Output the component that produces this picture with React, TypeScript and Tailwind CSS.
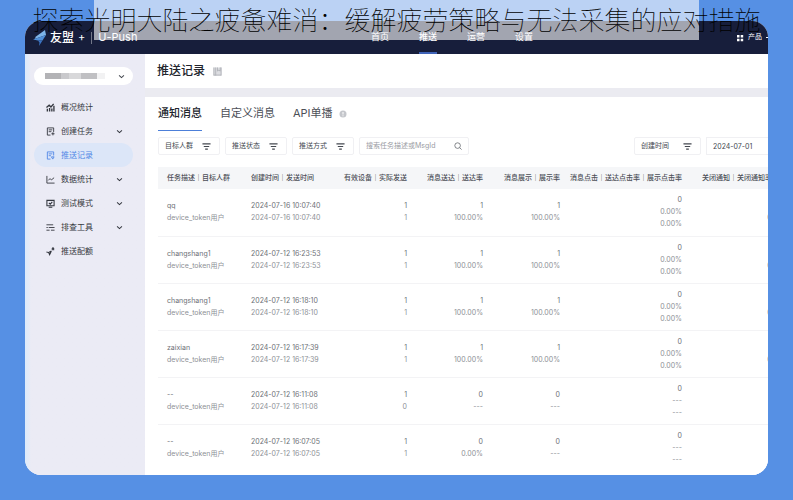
import { ReactNode } from "react";
import clsx from "clsx";

type Row = {
  name: string;
  time: string;
  sent: string;
  delivered: string[];
  shown: string[];
  clicked: string[];
  closed: string[];
  devices: string;
};

const clicks = ["0", "0.00%", "0.00%"];
const full = ["1", "100.00%"];
const none = ["0", "---"];

const rows: Row[] = [
  { name: "qq", time: "2024-07-16 10:07:40", devices: "1", sent: "1", delivered: full, shown: full, clicked: clicks, closed: ["0", "0.00%"] },
  { name: "changshang1", time: "2024-07-12 16:23:53", devices: "1", sent: "1", delivered: full, shown: full, clicked: clicks, closed: ["0", "0.00%"] },
  { name: "changshang1", time: "2024-07-12 16:18:10", devices: "1", sent: "1", delivered: full, shown: full, clicked: clicks, closed: ["0", "0.00%"] },
  { name: "zaixian", time: "2024-07-12 16:17:39", devices: "1", sent: "1", delivered: full, shown: full, clicked: clicks, closed: ["0", "0.00%"] },
  { name: "--", time: "2024-07-12 16:11:08", devices: "1", sent: "0", delivered: none, shown: none, clicked: ["0", "---", "---"], closed: ["0", "---"] },
  { name: "--", time: "2024-07-12 16:07:05", devices: "1", sent: "1", delivered: ["0", "0.00%"], shown: none, clicked: ["0", "---", "---"], closed: ["0", "---"] },
];

// Shared 10x10 stroke icon
function Icon({ children, className }: { children: ReactNode; className?: string }) {
  return (
    <svg
      viewBox="0 0 10 10"
      fill="none"
      stroke="currentColor"
      strokeWidth="1"
      className={clsx("shrink-0", className)}
      aria-hidden="true"
    >
      {children}
    </svg>
  );
}

const menu = [
  {
    label: "概况统计",
    icon: <path d="M1.5 9.500V6.500M4 9.500V5.500M6.500 9.500V6M8.800 9.500V3M.5 5l3-2.500 2 2L8.500 1" strokeWidth="1.5" />,
  },
  {
    label: "创建任务",
    expandable: true,
    icon: <path d="M5 9H1.5V1h7v4.5M3 3.2h4M3 5.2h3M6 7.5h3.5M7.7 5.8v3.5" />,
  },
  {
    label: "推送记录",
    active: true,
    icon: <path d="M5 9H1.5V1h7v4M3 3.2h4M3 5.2h2.5M6 6.5h3L7.5 9z" />,
  },
  {
    label: "数据统计",
    expandable: true,
    icon: <path d="M1 1v8h8.5M2.5 6l2-2 1.5 1.5L9 3" />,
  },
  {
    label: "测试模式",
    expandable: true,
    icon: <path d="M1 1.5h8v6H1zM3 9.2h4M3.2 4.2L4.7 5.7 7 3.2" strokeWidth="1.2" />,
  },
  {
    label: "排查工具",
    expandable: true,
    icon: <path d="M.5 2H8M3 5h6.5M.5 5H2M.5 8H4M5.5 8h4" />,
  },
  {
    label: "推送配额",
    icon: <path d="M.5 5.5l2.5.7 1 2.3 2-4M3 6.2L6 4.5M7 1v2.5M7 1h1.5M8.5 1v2.5" strokeWidth="1.2" />,
  },
];

function Chevron({ className }: { className?: string }) {
  return (
    <Icon className={clsx("size-[7px]", className)}>
      <path d="M1.5 3.5L5 6.5l3.5-3" strokeWidth="1.5" />
    </Icon>
  );
}

function FilterButton({ label, className = "w-[62px]" }: { label: string; className?: string }) {
  return (
    <button
      className={clsx(
        "flex h-[18px] shrink-0 items-center justify-between rounded-xs border border-[#f0f0f3] pr-2 pl-1.5 text-[7px] text-[#444850]",
        className
      )}
    >
      {label}
      <Icon className="size-[9px]">
        <path d="M.5 2h9M2 5h6M3.5 8h3" strokeWidth="1.3" />
      </Icon>
    </button>
  );
}

function Stack({ lines }: { lines: string[] }) {
  return (
    <>
      {lines.map((line, i) => (
        <div key={i} className={i === 0 ? "text-[#6d7076]" : "text-[#8d9096]"}>
          {line}
        </div>
      ))}
    </>
  );
}

function Header() {
  return (
    <header className="flex h-[33px] shrink-0 bg-[#171e3b] pl-2 text-white">
      <div className="flex w-[338px] shrink-0 items-center">
        <svg viewBox="0 0 14 16" className="h-4 w-[14px]" aria-hidden="true">
          <path d="M12 0L3 6.500 1.500 9 13 5z" fill="#7db4e8" />
          <path d="M0 9.500l13-4.500-3.500 5.500H5z" fill="#4f8fd8" />
          <path d="M5 10.500h4.500L6 16l.5-3.500z" fill="#3b74c4" />
        </svg>
        <span className="ml-[3px] text-[12px] font-medium">友盟</span>
        <span className="ml-1 text-[11px]">+</span>
        <span className="mx-1.5 h-3 w-px bg-white/40" />
        <span className="text-[11px]">U-Push</span>
      </div>
      <nav className="flex gap-[30px] text-[9px]">
        {["首页", "推送", "运营", "设置"].map((item) => (
          <a
            key={item}
            href="#"
            className={clsx(
              "flex items-center border-b-2 whitespace-nowrap",
              item === "推送" ? "border-[#3f63b8] font-medium" : "border-transparent"
            )}
          >
            {item}
          </a>
        ))}
      </nav>
      <button className="ml-auto flex items-center gap-1 text-[7px] whitespace-nowrap">
        <svg viewBox="0 0 8 8" fill="currentColor" className="size-2" aria-hidden="true">
          <path d="M1 1h2.500v2.500H1zM4.700 1h2.500v2.500H4.700zM1 4.700h2.500v2.500H1zM4.700 4.700h2.500v2.500H4.700z" />
        </svg>
        产品
        <span className="h-px w-0.5 bg-white" />
      </button>
    </header>
  );
}

function Sidebar() {
  return (
    <aside className="w-[120px] shrink-0 bg-linear-to-r from-[#dcebfb] to-[#ebebf5] to-5% pt-[13px] pr-3 pl-[9px]">
      <button
        aria-label="切换应用"
        className="flex h-[18px] w-full items-center justify-between rounded-full bg-white pr-2 pl-[11px] text-[#444850]"
      >
        {/* masked app name */}
        <span className="flex">
          <span className="h-1.5 w-4 bg-[#b3b3b6]" />
          <span className="h-1.5 w-2 bg-[#c9c9cc]" />
          <span className="h-1.5 w-3 bg-[#d8d8da]" />
          <span className="h-1.5 w-4 bg-[#c0c0c3]" />
          <span className="h-1.5 w-2 bg-[#f2f2f3]" />
        </span>
        <Chevron />
      </button>
      <nav className="mt-[10px]">
        {menu.map((item) => (
          <a
            key={item.label}
            href="#"
            className={clsx(
              "flex h-6 items-center rounded-full pr-[10px] pl-3 text-[8px]",
              item.active ? "bg-[#dce6f8] text-[#5288e6]" : "text-[#353840]"
            )}
          >
            <Icon className="size-[9px]">{item.icon}</Icon>
            <span className="ml-1.5 grow">{item.label}</span>
            {item.expandable && <Chevron />}
          </a>
        ))}
      </nav>
    </aside>
  );
}

function RecordsTable() {
  return (
    <table className="w-[631px] table-fixed text-[7px] leading-3 whitespace-nowrap">
      <colgroup>
        <col className="w-[84px]" />
        <col className="w-[84px]" />
        <col className="w-[81px]" />
        <col className="w-[76px]" />
        <col className="w-[77px]" />
        <col className="w-[122px]" />
        <col className="w-[107px]" />
      </colgroup>
      <thead>
        <tr className="h-[22px] bg-[#f5f6f8] text-right text-[#4c4f57] [&>th]:font-medium">
          <th className="pl-[9px] text-left">任务描述｜目标人群</th>
          <th className="pl-[9px] text-left">创建时间｜发送时间</th>
          <th>有效设备｜实际发送</th>
          <th>消息送达｜送达率</th>
          <th>消息展示｜展示率</th>
          <th>消息点击｜送达点击率｜展示点击率</th>
          <th className="pl-5 text-left">关闭通知｜关闭通知率</th>
        </tr>
      </thead>
      <tbody>
        {rows.map((row) => (
          <tr key={row.time} className="h-[47px] border-b border-[#f3f3f5] text-right last:border-0">
            <td className="pl-[9px] text-left">
              <Stack lines={[row.name, "device_token用户"]} />
            </td>
            <td className="pl-[9px] text-left">
              <Stack lines={[row.time, row.time]} />
            </td>
            <td><Stack lines={[row.devices, row.sent]} /></td>
            <td><Stack lines={row.delivered} /></td>
            <td><Stack lines={row.shown} /></td>
            <td><Stack lines={row.clicked} /></td>
            <td><Stack lines={row.closed} /></td>
          </tr>
        ))}
      </tbody>
    </table>
  );
}

export default function App() {
  return (
    <div className="relative flex min-h-screen flex-col overflow-hidden bg-[#5690e4] px-[25px] pt-[21px] pb-[25px] font-['Inter','Noto_Sans_CJK_SC',sans-serif]">
      <div className="flex grow flex-col overflow-hidden rounded-2xl bg-white">
        <Header />
        <div className="flex grow">
          <Sidebar />
          <main className="flex min-w-0 grow flex-col bg-[#ebebf1]">
            <div className="flex h-[34px] items-center gap-2 bg-white px-3">
              <h2 className="text-[12px] font-medium text-[#22252d]">推送记录</h2>
              <Icon className="size-[9px] text-[#b0b2b8]">
                <path d="M.5 .5h9v9h-9z" fill="#dcdde1" stroke="none" />
                <path d="M1 .5v9M3 .5v9M5 .5v4l1.500-1L8 4.500v-4M9 .5v9M1 9h8" />
              </Icon>
            </div>

            <section className="mt-[9px] grow overflow-hidden bg-white pl-[13px]">
              <div className="flex h-[34px] gap-[18px] text-[11px] whitespace-nowrap text-[#4c4f57]">
                <button className="border-b border-[#4c7fd9] font-medium text-[#22252d]">通知消息</button>
                <button className="border-b border-transparent">自定义消息</button>
                <button className="flex items-center gap-1.5 border-b border-transparent">
                  API单播
                  <svg viewBox="0 0 8 8" className="size-2" aria-hidden="true">
                    <circle cx="4" cy="4" r="3.500" fill="#c4c6cb" />
                    <path d="M4 2v2.500M4 5.300v1" stroke="#fff" />
                  </svg>
                </button>
              </div>

              <div className="mt-[6px] flex gap-[5px]">
                <FilterButton label="目标人群" />
                <FilterButton label="推送状态" />
                <FilterButton label="推送方式" />
                <label className="flex h-[18px] w-[110px] shrink-0 items-center rounded-xs border border-[#f0f0f3] px-1.5">
                  <input
                    type="text"
                    aria-label="搜索任务"
                    placeholder="搜索任务描述或MsgId"
                    className="min-w-0 grow text-[7px] outline-none placeholder:text-[#9a9ca3]"
                  />
                  <Icon className="size-2 text-[#666970]">
                    <circle cx="4.500" cy="4.500" r="3.500" />
                    <path d="M7 7l2.500 2.500" />
                  </Icon>
                </label>
                <div className="ml-auto flex gap-[5px]">
                  <FilterButton label="创建时间" className="w-[67px]" />
                  <input
                    type="text"
                    aria-label="开始日期"
                    defaultValue="2024-07-01"
                    className="h-[18px] w-[62px] border border-r-0 border-[#f0f0f3] pl-1.5 text-[7px] text-[#444850] outline-none"
                  />
                </div>
              </div>

              <div className="mt-3 overflow-hidden">
                <RecordsTable />
              </div>
            </section>
          </main>
        </div>
      </div>

      {/* headline banner over the top of the window */}
      <div className="pointer-events-none absolute inset-x-0 top-0 flex justify-center">
        <div className="flex h-10 w-[605px] items-start justify-center bg-white/60">
          <h1 className="text-[26px] leading-[38px] font-thin whitespace-nowrap text-black font-['Noto_Sans_CJK_SC',sans-serif]">
            探索光明大陆之疲惫难消：缓解疲劳策略与无法采集的应对措施
          </h1>
        </div>
      </div>
    </div>
  );
}
